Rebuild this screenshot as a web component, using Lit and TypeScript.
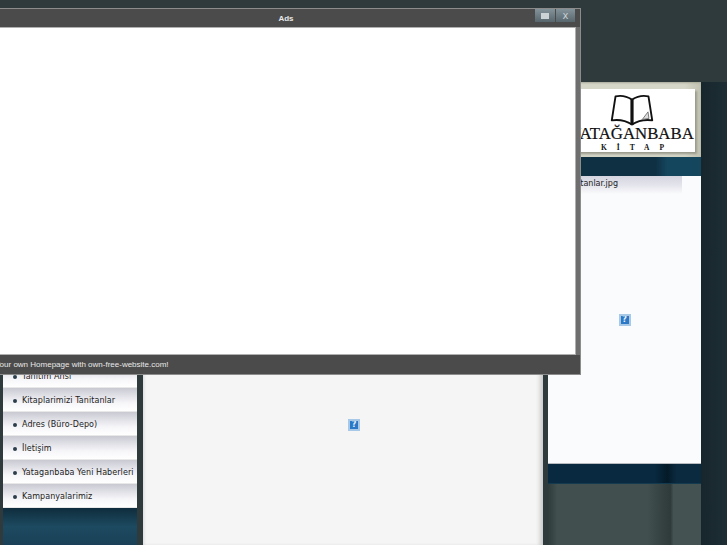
import { LitElement, html, css, svg } from "lit";
import { customElement } from "lit/decorators.js";

const MENU = ["Tanitim Ansi", "Kitaplarimizi Tanitanlar", "Adres (Büro-Depo)", "İletişim", "Yataganbaba Yeni Haberleri", "Kampanyalarimiz"];

const bookIcon = svg`<svg class="book" viewBox="0 0 46 34" width="46" height="32" aria-hidden="true">
  <path d="M23 6 C17 2 10 1.5 5.5 2.5 L1.5 28 C9 27 17 28.5 23 32.5 C29 28.5 37 27 44.5 28 L40.5 2.5 C36 1.5 29 2 23 6 Z" fill="#fff" stroke="#111" stroke-width="2" stroke-linejoin="round"/>
  <path d="M23 6 V33" stroke="#111" stroke-width="3.4" fill="none"/>
  <path d="M34 27 L40 19 L41 26 Z" fill="#ddd" stroke="#666" stroke-width=".9"/>
</svg>`;

@customElement("help-mark")
class HelpMark extends LitElement {
  static styles = css`
    :host { display: block; width: 12px; height: 12px; box-sizing: border-box; background: #2b78c6; border: 2px solid #a8c8e8; color: #e6f0fa; font: bold 8px/8px "DejaVu Sans", sans-serif; text-align: center; overflow: hidden; }
  `;
  render() { return html`?`; }
}

@customElement("app-root")
export class AppRoot extends LitElement {
  static styles = css`
    :host { display: block; position: relative; width: 727px; height: 545px; overflow: hidden; background: #2f3a3c; font-family: "DejaVu Sans", sans-serif; }
    .page { display: grid; grid-template-columns: 3px 134px 6px 400px 5px 153px 26px; height: 545px; }
    .left { grid-column: 2; display: flex; flex-direction: column; padding-top: 364px; }
    .menu-item { height: 24px; box-sizing: border-box; display: flex; align-items: center; gap: 5px; padding: 2px 0 0 10px; font-size: 8px; letter-spacing: .07px; color: #222; white-space: nowrap; overflow: hidden; background: linear-gradient(#c9c9d2, #dedee5 30%, #f6f6f9 65%, #fff); border-bottom: 1px solid #e8e8e8; }
    .dot { width: 4px; height: 4px; border-radius: 50%; background: #2c3e4c; flex: none; margin-top: 1px; }
    .left-foot { flex: 1; background: linear-gradient(#0f2d3d, #1d4a60 50%, #1a4057); }
    .center { grid-column: 4; margin-top: 100px; background: #f5f5f5; box-shadow: inset -5px 0 4px -2px #c9c9c9, inset 3px 0 3px -2px #d8d8d8; display: flex; flex-direction: column; align-items: center; padding-top: 319px; padding-left: 22px; }
    .right-col { grid-column: 6; display: flex; flex-direction: column; padding-top: 82px; }
    .logo-frame { height: 75px; box-sizing: border-box; background: linear-gradient(90deg, #d6d6c8 90%, #c2c2b2); padding: 7px 6px 5px 0; margin-left: -10px; box-shadow: inset 0 1px 2px #a8a89a; }
    .logo { height: 100%; background: #fff; display: flex; flex-direction: column; align-items: center; padding-left: 31px; box-shadow: 2px 2px 2px #9a9a8c; overflow: hidden; }
    .book { margin-top: 5px; flex: none; }
    .brand { font: 16.8px/14px "Liberation Serif", serif; color: #111; white-space: nowrap; margin: 1px 0 0 -1px; -webkit-text-stroke: .2px #111; }
    .sub { font: bold 7.5px/9px "Liberation Serif", serif; color: #111; letter-spacing: 10px; margin: 2px 0 0 11px; }
    .teal { height: 19px; background: linear-gradient(90deg, #0f2f42 70%, #14465e 78%); }
    .panel { height: 287px; background: #fafbfc; border-bottom: 1px solid #b8bcc0; display: flex; flex-direction: column; align-items: center; }
    .caption { align-self: flex-start; width: 134px; height: 18px; box-sizing: border-box; background: linear-gradient(#d4d5df, #e4e4ec 50%, #fafbfc); font-size: 8px; line-height: 15px; color: #222; display: flex; justify-content: flex-end; padding-right: 64px; white-space: nowrap; flex: none; }
    .panel help-mark { margin-top: 120px; }
    .band { height: 19px; background: linear-gradient(90deg, #08293f 70%, #041a28 78%, #0b2a3f 84%); border-bottom: 1px solid #143a50; }
    .ground { flex: 1; background: linear-gradient(90deg, #2f3b3b, #414f4f 6%, #414f4f 65%, #2f3a3a 80%, #445252 82%); }
    .edge { grid-column: 7; margin-top: 82px; background: linear-gradient(90deg, #16262c, #1d2e34); }

    .win { position: absolute; left: -9px; top: 8px; width: 590px; height: 367px; box-sizing: border-box; background: #4b4b4b; border: 1px solid #8c8c8c; display: flex; flex-direction: column; color: #e8e8e8; font-family: "Liberation Sans", sans-serif; font-size: 8px; }
    .title { height: 18px; flex: none; position: relative; display: flex; align-items: center; justify-content: center; font-weight: bold; box-sizing: border-box; }
    .ctrls { position: absolute; right: 5px; top: 0; display: flex; gap: 1px; height: 13px; }
    .ctrl { width: 19px; background: linear-gradient(#84929a, #57656c); display: flex; align-items: center; justify-content: center; color: #c6ced2; font: 10px/1 "DejaVu Sans", sans-serif; }
    .ctrl:first-child { width: 20px; }
    .sq { width: 8px; height: 6px; background: #ccd3d6; }
    .rim { background: #6e6e6e; flex: 1; display: flex; padding: 0 4px 0 0; }
    .body { flex: 1; background: #fff; border: 1px solid #b0b0b0; border-left: 0; }
    .status { height: 19px; flex: none; display: flex; align-items: center; padding-left: 3px; white-space: nowrap; }
  `;

  render() {
    return html`
      <div class="page">
        <div class="left">
          ${MENU.map((m) => html`<div class="menu-item"><span class="dot"></span>${m}</div>`)}
          <div class="left-foot"></div>
        </div>
        <div class="center"><help-mark></help-mark></div>
        <div class="right-col">
          <div class="logo-frame">
            <div class="logo">
              ${bookIcon}
              <div class="brand">YATAĞANBABA</div>
              <div class="sub">KİTAP</div>
            </div>
          </div>
          <div class="teal"></div>
          <div class="panel">
            <div class="caption">Tanitanlar.jpg</div>
            <help-mark></help-mark>
          </div>
          <div class="band"></div>
          <div class="ground"></div>
        </div>
        <div class="edge"></div>
      </div>
      <div class="win">
        <div class="title">Ads
          <div class="ctrls">
            <div class="ctrl"><span class="sq"></span></div>
            <div class="ctrl">x</div>
          </div>
        </div>
        <div class="rim"><div class="body"></div></div>
        <div class="status">Your own Homepage with own-free-website.com!</div>
      </div>
    `;
  }
}
